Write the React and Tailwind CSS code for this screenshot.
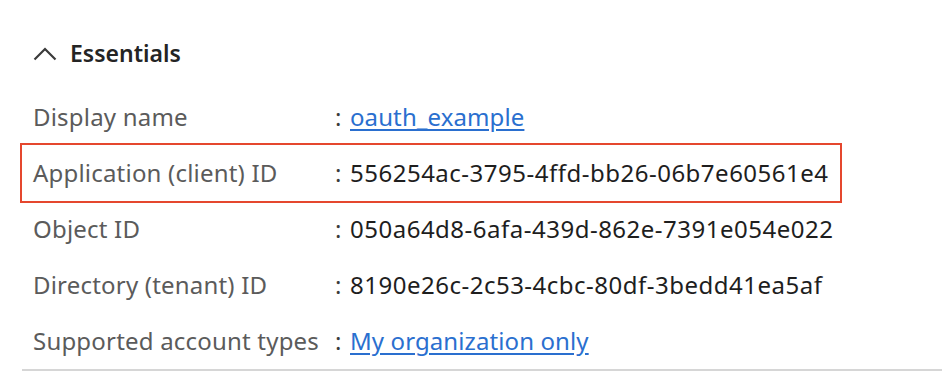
export default function App() {
  const rows = [
    { label: "Display name", value: "oauth_example", link: true },
    { label: "Application (client) ID", value: "556254ac-3795-4ffd-bb26-06b7e60561e4", highlight: true },
    { label: "Object ID", value: "050a64d8-6afa-439d-862e-7391e054e022" },
    { label: "Directory (tenant) ID", value: "8190e26c-2c53-4cbc-80df-3bedd41ea5af" },
    { label: "Supported account types", value: "My organization only", link: true },
  ];
  return (
    <div className="w-[942px] h-[376px] bg-white overflow-hidden" style={{ fontFamily: '"Noto Sans", "Open Sans", sans-serif' }}>
      <div className="ml-[22px] border-b-2 border-[#d6d6d6]">
        <div className="flex items-center h-[89px] pl-[11px] pt-[18px] gap-[13px]">
          <svg width="24" height="14" viewBox="0 0 24 14" className="shrink-0">
            <path d="M1.5 12.5 L12 2 L22.5 12.5" fill="none" stroke="#3b3b3b" strokeWidth="2.2" />
          </svg>
          <span className="text-[23px] font-semibold text-[#242424]">Essentials</span>
        </div>
        {rows.map((r) => (
          <div
            key={r.label}
            className={
              "flex items-center h-[56px] pl-[11px] " +
              (r.highlight ? "w-fit pr-[11px] outline-2 outline-[#e5472e]" : "")
            }
          >
            <span className="w-[302px] text-[24px] tracking-[0.2px] text-[#5b5b5b] whitespace-nowrap">{r.label}</span>
            <span className="w-[15px] text-[24px] text-[#3b3b3b]">:</span>
            {r.link ? (
              <span className="text-[24px] tracking-[0.1px] text-[#2a6fcf] underline underline-offset-[3px] whitespace-nowrap">{r.value}</span>
            ) : (
              <span className="text-[24px] tracking-[0.5px] text-[#1e1e1e] whitespace-nowrap">{r.value}</span>
            )}
          </div>
        ))}
      </div>
    </div>
  );
}
